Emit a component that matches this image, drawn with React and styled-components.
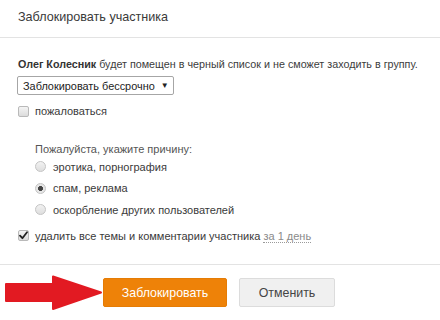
import React from 'react'
import styled, { createGlobalStyle } from 'styled-components'

const GlobalStyle = createGlobalStyle`
  html, body {
    margin: 0;
    padding: 0;
    background: #fff;
  }
  body {
    font-family: "Liberation Sans", Arial, sans-serif;
    color: #333;
  }
`

export default function App() {
    return (
        <>
            <GlobalStyle />
            <Dialog>
                <Header>Заблокировать участника</Header>
                <Body>
                    <Notice>
                        <b>Олег Колесник</b> будет помещен в черный список и не сможет заходить в группу.
                    </Notice>
                    <Select>
                        <span>Заблокировать бессрочно</span>
                        <span className="caret">▼</span>
                    </Select>
                    <CheckRow>
                        <CheckBox />
                        <span>пожаловаться</span>
                    </CheckRow>
                    <Reasons>
                        <Prompt>Пожалуйста, укажите причину:</Prompt>
                        <RadioRow>
                            <Radio />
                            <span>эротика, порнография</span>
                        </RadioRow>
                        <RadioRow>
                            <Radio $checked />
                            <span>спам, реклама</span>
                        </RadioRow>
                        <RadioRow>
                            <Radio />
                            <span>оскорбление других пользователей</span>
                        </RadioRow>
                    </Reasons>
                    <CheckRow $delete>
                        <CheckBox $checked>
                            <svg width="9" height="9" viewBox="0 0 9 9">
                                <path d="M1 4.6 L3.4 7.2 L8 1.3" fill="none" stroke="#222" strokeWidth="1.8" strokeLinecap="round" strokeLinejoin="round" />
                            </svg>
                        </CheckBox>
                        <span>удалить все темы и комментарии участника <Period>за 1 день</Period></span>
                    </CheckRow>
                </Body>
                <Footer>
                    <svg width="98" height="36" viewBox="0 0 98 36">
                        <path
                            d="M1 9 L48 9 L48 1.5 L96 17.5 L48 34 L48 26 L1 26 Z"
                            fill="#e21a22"
                            stroke="#e21a22"
                            strokeWidth="2"
                            strokeLinejoin="round"
                        />
                    </svg>
                    <Button $primary>Заблокировать</Button>
                    <Button>Отменить</Button>
                </Footer>
            </Dialog>
        </>
    )
}

const Dialog = styled.div`
    width: 440px;
    height: 320px;
    background: #fff;
    overflow: hidden;
`

const Header = styled.div`
    height: 38px;
    box-sizing: border-box;
    padding: 9px 18px 0;
    font-size: 12.6px;
    line-height: 16px;
    color: #3a3a3a;
    border-bottom: 1px solid #e3e3e3;
`

const Body = styled.div`
    display: flex;
    flex-direction: column;
    align-items: flex-start;
    padding: 18px 17px 20px 18px;
    font-size: 11px;
    line-height: 16px;
    border-bottom: 1px solid #e3e3e3;
`

const Notice = styled.div`
    color: #3c3c3c;
    white-space: nowrap;
    font-size: 10.75px;
    b {
        color: #333;
    }
`

const Select = styled.div`
    margin-top: 4px;
    margin-left: -1px;
    box-sizing: border-box;
    width: 157px;
    height: 19px;
    padding: 0 0 0 5px;
    display: flex;
    align-items: center;
    gap: 6px;
    border: 1px solid #a6a6a6;
    border-radius: 2px;
    font-size: 10.9px;
    color: #222;
    white-space: nowrap;
    .caret {
        font-size: 8px;
        color: #222;
    }
`

const CheckRow = styled.div`
    display: flex;
    align-items: center;
    gap: 6px;
    margin-top: ${p => (p.$delete ? '10px' : '8px')};
    color: #3a3a3a;
    white-space: nowrap;
`

const CheckBox = styled.span`
    width: 11px;
    height: 11px;
    box-sizing: border-box;
    border: 1px solid #b9b9b9;
    border-radius: 2px;
    background: linear-gradient(#f4f4f4, #dcdcdc);
    display: flex;
    align-items: center;
    justify-content: center;
`

const Reasons = styled.div`
    display: flex;
    flex-direction: column;
    gap: 5.5px;
    margin-top: 22px;
    padding-left: 17px;
`

const Prompt = styled.div`
    color: #555;
    margin-bottom: -4px;
`

const RadioRow = styled.div`
    display: flex;
    align-items: center;
    gap: 7px;
    color: #3a3a3a;
`

const Radio = styled.span`
    width: 11px;
    height: 11px;
    box-sizing: border-box;
    border-radius: 50%;
    border: 1px solid #c4c4c4;
    background: ${p =>
        p.$checked
            ? 'radial-gradient(circle, #444 0 2.2px, #e6e6e6 2.8px)'
            : 'linear-gradient(#f2f2f2, #dedede)'};
`

const Period = styled.span`
    color: #8a8a8a;
    border-bottom: 1px dotted #9a9a9a;
`

const Footer = styled.div`
    display: flex;
    align-items: center;
    gap: 12px;
    padding: 10px 0 0 5px;

    svg {
        margin-right: -12px;
    }
`

const Button = styled.div`
    height: 29px;
    box-sizing: border-box;
    display: flex;
    align-items: center;
    justify-content: center;
    width: ${p => (p.$primary ? '124px' : '96px')};
    border-radius: 2px;
    font-size: 12.4px;
    background: ${p => (p.$primary ? '#ee8208' : '#f0f0f0')};
    color: ${p => (p.$primary ? '#fff' : '#444')};
    border: 1px solid ${p => (p.$primary ? '#e57c05' : '#dcdcdc')};
`
